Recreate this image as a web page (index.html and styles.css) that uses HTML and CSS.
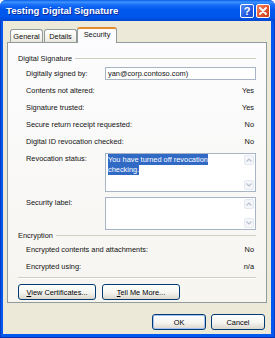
FILE: index.html
```html
<!DOCTYPE html>
<html lang="en">
<head>
    <meta charset="UTF-8">
    <title>Testing Digital Signature</title>
    <link rel="stylesheet" href="styles.css">
</head>
<body>
    <div class="window">
        <div class="titlebar">
            <span class="title">Testing Digital Signature</span>
            <div class="caption-btns">
                <span class="cap-btn help">?</span>
                <span class="cap-btn close">
                    <svg width="8" height="8" viewBox="0 0 8 8"><path d="M1 1L7 7M7 1L1 7" stroke="#fff" stroke-width="1.8" stroke-linecap="round"/></svg>
                </span>
            </div>
        </div>
        <div class="frame">
            <div class="client">
                <div class="tabs">
                    <div class="tab">General</div>
                    <div class="tab">Details</div>
                    <div class="tab active">Security</div>
                </div>
                <div class="panel">
                    <div class="group-head"><span>Digital Signature</span></div>
                    <div class="fields">
                        <div class="row field-row">
                            <span class="lbl">Digitally signed by:</span>
                            <div class="field">yan@corp.contoso.com)</div>
                        </div>
                        <div class="row"><span>Contents not altered:</span><span class="val">Yes</span></div>
                        <div class="row"><span>Signature trusted:</span><span class="val">Yes</span></div>
                        <div class="row"><span>Secure return receipt requested:</span><span class="val">No</span></div>
                        <div class="row"><span>Digital ID revocation checked:</span><span class="val">No</span></div>
                        <div class="memo-row status">
                            <span class="lbl">Revocation status:</span>
                            <div class="memo">
                                <div class="memo-text"><span class="sel">You have turned off revocation</span><br><span class="sel">checking.</span></div>
                                <div class="scroll">
                                    <span class="sbtn"><svg width="6" height="4" viewBox="0 0 6 4"><path d="M0.5 3.5L3 1L5.5 3.5" fill="none" stroke="#b9c1cf" stroke-width="1.2"/></svg></span>
                                    <span class="sbtn"><svg width="6" height="4" viewBox="0 0 6 4"><path d="M0.5 0.5L3 3L5.5 0.5" fill="none" stroke="#b9c1cf" stroke-width="1.2"/></svg></span>
                                </div>
                            </div>
                        </div>
                        <div class="memo-row label">
                            <span class="lbl">Security label:</span>
                            <div class="memo">
                                <div class="memo-text"></div>
                                <div class="scroll">
                                    <span class="sbtn"><svg width="6" height="4" viewBox="0 0 6 4"><path d="M0.5 3.5L3 1L5.5 3.5" fill="none" stroke="#b9c1cf" stroke-width="1.2"/></svg></span>
                                    <span class="sbtn"><svg width="6" height="4" viewBox="0 0 6 4"><path d="M0.5 0.5L3 3L5.5 0.5" fill="none" stroke="#b9c1cf" stroke-width="1.2"/></svg></span>
                                </div>
                            </div>
                        </div>
                    </div>
                    <div class="group-head"><span>Encryption</span></div>
                    <div class="fields enc">
                        <div class="row"><span>Encrypted contents and attachments:</span><span class="val">No</span></div>
                        <div class="row"><span>Encrypted using:</span><span class="val">n/a</span></div>
                    </div>
                    <div class="sep"></div>
                    <div class="panel-btns">
                        <button class="btn wide"><u>V</u>iew Certificates...</button>
                        <button class="btn wide"><u>T</u>ell Me More...</button>
                    </div>
                </div>
                <div class="footer">
                    <button class="btn default">OK</button>
                    <button class="btn">Cancel</button>
                </div>
            </div>
        </div>
    </div>
</body>
</html>
```

FILE: styles.css
```css
* {
    box-sizing: border-box;
}
body {
    margin: 0;
    background: #fff;
    font-family: "Liberation Sans", Arial, sans-serif;
    font-size: 7.4px;
    color: #111;
}
.window {
    width: 275px;
    height: 338px;
    display: flex;
    flex-direction: column;
    border-radius: 6px 6px 0 0;
    overflow: hidden;
    background: #0055e5;
}
.titlebar {
    height: 21px;
    flex: none;
    display: flex;
    align-items: center;
    padding: 0 5px 0 6px;
    background: linear-gradient(to bottom, #0a5ee8 0%, #3d95ff 10%, #1a6ff8 22%, #0058ee 45%, #0056eb 80%, #0047d0 100%);
}
.title {
    font-weight: bold;
    font-size: 9.6px;
    color: #fff;
    text-shadow: 1px 1px 0 #0a2a9c;
}
.caption-btns {
    margin-left: auto;
    display: flex;
    gap: 2px;
}
.cap-btn {
    width: 14px;
    height: 14px;
    border: 1px solid #fff;
    border-radius: 2px;
    display: flex;
    align-items: center;
    justify-content: center;
}
.help {
    background: linear-gradient(135deg, #5a8ff7, #2159e0 60%, #1a4fd0);
    color: #fff;
    font-weight: bold;
    font-size: 11px;
}
.close {
    background: linear-gradient(135deg, #f08a66, #e2512a 60%, #c8411d);
}
.frame {
    flex: 1;
    border-left: 1px solid #0a3bc6;
    border-right: 1px solid #0a3bc6;
    border-bottom: 1px solid #0a2fa8;
    padding: 0 3px 3px 2px;
    background: #0058ee;
}
.client {
    height: 100%;
    background: #ece9d8;
    padding: 0 4px;
}
.tabs {
    height: 21px;
    display: flex;
    align-items: flex-end;
    padding-left: 3px;
    position: relative;
    z-index: 1;
}
.tab {
    height: 13px;
    width: 33px;
    margin-right: 1px;
    border: 1px solid #919b9c;
    border-bottom: none;
    border-radius: 3px 3px 0 0;
    background: linear-gradient(#ffffff, #f3f2ec 70%, #e8e6dc);
    display: flex;
    align-items: center;
    justify-content: center;
    padding-top: 1px;
}
.tab.active {
    width: 40px;
    height: 16px;
    margin: 0 0 -1px -1px;
    border-top: 2px solid #e68b2c;
    background: #fcfcfe;
    padding-top: 0;
    padding-bottom: 3px;
}
.panel {
    height: 261px;
    border: 1px solid #919b9c;
    background: linear-gradient(#fcfcfe, #f6f5f0);
    padding: 10px 10px 0 10px;
}
.group-head {
    height: 10px;
    display: flex;
    align-items: center;
    gap: 3px;
}
.group-head::after {
    content: "";
    flex: 1;
    height: 1px;
    background: #d0d0bf;
}
.fields {
    margin-left: 8px;
}
.row {
    display: flex;
    align-items: center;
    height: 17px;
}
.val {
    margin-left: auto;
    padding-right: 2px;
}
.lbl {
    width: 79px;
    flex: none;
}
.field-row {
    height: 13px;
    margin: 4px 0 2px;
}
.field {
    flex: 1;
    height: 13px;
    border: 1px solid #a7b4c6;
    background: #fff;
    padding-left: 2px;
    line-height: 11px;
}
.memo-row {
    display: flex;
    align-items: flex-start;
}
.memo-row .lbl {
    padding-top: 1px;
    line-height: 10px;
}
.status {
    height: 39px;
    margin-top: 3px;
}
.label {
    height: 33px;
    margin-top: 5px;
}
.memo {
    flex: 1;
    height: 100%;
    border: 1px solid #a7b4c6;
    background: #fff;
    display: flex;
}
.memo-text {
    flex: 1;
    padding: 1px 2px;
    line-height: 10px;
}
.sel {
    background: #316ac5;
    color: #fff;
    padding: 1px 0;
}
.scroll {
    width: 12px;
    padding: 1px;
    display: flex;
    flex-direction: column;
    justify-content: space-between;
}
.sbtn {
    height: 10px;
    border: 1px solid #e3e8f2;
    border-radius: 2px;
    background: #f4f6fa;
    display: flex;
    align-items: center;
    justify-content: center;
}
.enc {
    margin-top: 1px;
}
.sep {
    height: 2px;
    margin-top: 2px;
    border-top: 1px solid #d0d0bf;
    border-bottom: 1px solid #fff;
}
.panel-btns {
    display: flex;
    gap: 6px;
    margin-top: 5px;
}
.btn {
    height: 16px;
    width: 54px;
    padding: 0;
    border: 1px solid #003c74;
    border-radius: 3px;
    background: linear-gradient(#ffffff, #f4f4f0 55%, #dcd7cb);
    font-family: inherit;
    font-size: 7.4px;
    color: #000;
}
.btn.wide {
    width: 78px;
}
.btn.default {
    box-shadow: inset 0 0 0 1px #a7c1f4;
}
.footer {
    display: flex;
    justify-content: flex-end;
    gap: 5px;
    margin-top: 11px;
    padding-right: 2px;
}
```
